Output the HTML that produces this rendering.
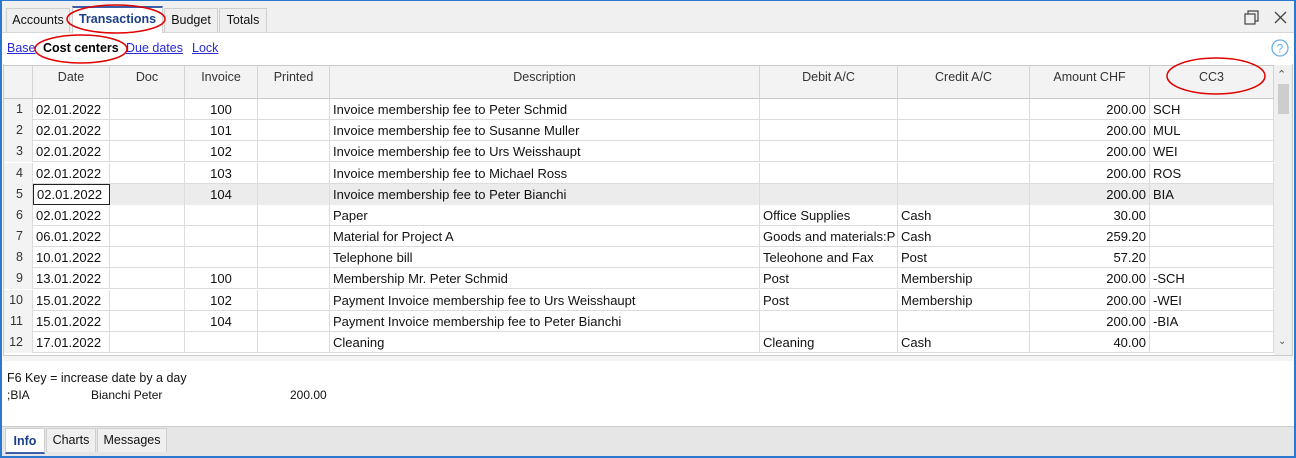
<!DOCTYPE html>
<html><head><meta charset="utf-8"><style>
*{box-sizing:border-box;margin:0;padding:0}
body{width:1296px;height:458px;overflow:hidden;background:#fff;font-family:"Liberation Sans",Arial,sans-serif;position:relative}
.a{position:absolute}
.frame{left:0;top:0;width:1296px;height:458px;border:2px solid #2b78d0;border-top:1px solid #2b78d0}
.topbar{left:2px;top:1px;width:1292px;height:32px;background:#f0f0f0;border-bottom:1px solid #d8d8d8}
.tab{position:absolute;top:8px;height:24px;border:1px solid #cfcfcf;border-bottom:none;background:#efefef;font-size:12.5px;color:#111;text-align:center;line-height:22px}
.tab.sel{background:#fff;top:6px;height:27px;border-top:2px solid #3c5fa8;font-weight:bold;color:#1a3f8a}
.lnk{position:absolute;top:41px;font-size:12.5px;color:#2a2ad8;text-decoration:underline}
.hdr{position:absolute;top:65px;height:34px;background:#f3f3f3;border-right:1px solid #d4d4d4;border-bottom:1px solid #c8c8c8;font-size:12.5px;color:#333;text-align:center;padding-top:4px;border-top:1px solid #c8c8c8}
.row{position:absolute;left:4px;height:21px;width:1270px;border-bottom:1px solid #dcdcdc;font-size:13px;color:#111}
.row div{position:absolute;top:0;height:21px;line-height:21px;border-right:1px solid #dcdcdc;white-space:nowrap;overflow:hidden;padding:0 3px}
.row .n{background:#f3f3f3;color:#333;text-align:right;padding-right:9px;font-size:12.5px}
.r{text-align:right}.c{text-align:center}
.hl div{background:#ececec}
</style></head><body>
<div class="a topbar"></div>
<div class="tab" style="left:6px;width:64px">Accounts</div>
<div class="tab sel" style="left:72px;width:91px">Transactions</div>
<div class="tab" style="left:164px;width:54px">Budget</div>
<div class="tab" style="left:219px;width:48px">Totals</div>
<svg class="a" style="left:1240px;top:8px" width="50" height="20"><rect x="5" y="6" width="10" height="10" fill="none" stroke="#444" stroke-width="1.2"/><path d="M8 6V3h10v10h-3" fill="none" stroke="#444" stroke-width="1.2"/><path d="M35 4l11 11M46 4L35 15" stroke="#444" stroke-width="1.3"/></svg>
<div class="lnk" style="left:7px">Base</div>
<div class="lnk" style="left:43px;color:#000;text-decoration:none;font-weight:bold">Cost centers</div>
<div class="lnk" style="left:126px">Due dates</div>
<div class="lnk" style="left:192px">Lock</div>
<svg class="a" style="left:1270px;top:38px" width="20" height="20"><circle cx="10" cy="10" r="8" fill="none" stroke="#6ab0e8" stroke-width="1.3"/><text x="10" y="14.5" font-size="12" fill="#6ab0e8" text-anchor="middle" font-family="Liberation Sans">?</text></svg>
<div class="a" style="left:3px;top:64px;width:1290px;height:292px;border:1px solid #c8c8c8;border-top:none"></div>
<div class="hdr" style="left:4px;width:29px"></div>
<div class="hdr" style="left:33px;width:77px">Date</div>
<div class="hdr" style="left:110px;width:75px">Doc</div>
<div class="hdr" style="left:185px;width:73px">Invoice</div>
<div class="hdr" style="left:258px;width:72px">Printed</div>
<div class="hdr" style="left:330px;width:430px">Description</div>
<div class="hdr" style="left:760px;width:138px">Debit A/C</div>
<div class="hdr" style="left:898px;width:132px">Credit A/C</div>
<div class="hdr" style="left:1030px;width:120px">Amount CHF</div>
<div class="hdr" style="left:1150px;width:124px">CC3</div>
<div class="a" style="left:1274px;top:65px;width:18px;height:290px;background:#f0f0f0"></div>
<div class="a" style="left:1278px;top:84px;width:11px;height:30px;background:#cdcdcd"></div>
<div class="a" style="left:1277px;top:68px;font-size:11px;color:#555">&#8963;</div>
<div class="a" style="left:1278px;top:336px;font-size:10px;color:#555">&#8964;</div>
<div id="rows"></div>
<div class="a" style="left:3px;top:355px;width:1290px;height:6px;background:#f4f4f4;border-top:1px solid #ccc"></div>
<div class="a" style="left:7px;top:371px;font-size:12.5px;color:#111">F6 Key = increase date by a day</div>
<div class="a" style="left:7px;top:388px;font-size:12px;color:#111">;BIA</div>
<div class="a" style="left:91px;top:388px;font-size:12px;color:#111">Bianchi Peter</div>
<div class="a" style="left:290px;top:388px;font-size:12px;color:#111">200.00</div>
<div class="a" style="left:2px;top:426px;width:1292px;height:30px;background:#e6e6e6;border-top:1px solid #ccc"></div>
<div class="tab" style="left:5px;top:428px;width:40px;height:26px;background:#fff;font-weight:bold;color:#1a3f8a;line-height:24px;border-bottom:2px solid #3c5fa8">Info</div>
<div class="tab" style="left:46px;top:428px;width:50px;background:#efefef">Charts</div>
<div class="tab" style="left:97px;top:428px;width:70px;background:#efefef">Messages</div>
<div class="a frame"></div>
<svg class="a" style="left:0;top:0" width="1296" height="120">
<ellipse cx="116" cy="19" rx="49" ry="14" fill="none" stroke="#e00000" stroke-width="1.5"/>
<ellipse cx="81" cy="49" rx="46" ry="14" fill="none" stroke="#e00000" stroke-width="1.5"/>
<ellipse cx="1216" cy="76" rx="49" ry="18" fill="none" stroke="#e00000" stroke-width="1.5"/>
</svg>
<script>
var d=[["02.01.2022","","100","","Invoice membership fee to Peter Schmid","","","200.00","SCH"],
["02.01.2022","","101","","Invoice membership fee to Susanne Muller","","","200.00","MUL"],
["02.01.2022","","102","","Invoice membership fee to Urs Weisshaupt","","","200.00","WEI"],
["02.01.2022","","103","","Invoice membership fee to Michael Ross","","","200.00","ROS"],
["02.01.2022","","104","","Invoice membership fee to Peter Bianchi","","","200.00","BIA"],
["02.01.2022","","","","Paper","Office Supplies","Cash","30.00",""],
["06.01.2022","","","","Material for Project A","Goods and materials:P","Cash","259.20",""],
["10.01.2022","","","","Telephone bill","Teleohone and Fax","Post","57.20",""],
["13.01.2022","","100","","Membership Mr. Peter Schmid","Post","Membership","200.00","-SCH"],
["15.01.2022","","102","","Payment Invoice membership fee to Urs Weisshaupt","Post","Membership","200.00","-WEI"],
["15.01.2022","","104","","Payment Invoice membership fee to Peter Bianchi","","","200.00","-BIA"],
["17.01.2022","","","","Cleaning","Cleaning","Cash","40.00",""]];
var L=[0,29,106,181,254,326,756,894,1026,1146],W=[29,77,75,73,72,430,138,132,120,124],cls=["n","","","c","","","","","r",""];
var h="";
for(var i=0;i<12;i++){var t=Math.round(99+i*21.18);
h+='<div class="row'+(i==4?' hl':'')+'" style="top:'+t+'px">';
var v=[String(i+1)].concat(d[i]);
for(var j=0;j<10;j++){var st='left:'+L[j]+'px;width:'+W[j]+'px';
if(i==4&&j==1)st+=';border:1px solid #222;background:#fff;line-height:19px';
h+='<div class="'+cls[j]+'" style="'+st+'">'+v[j]+'</div>';}
h+='</div>';}
document.getElementById('rows').innerHTML=h;
</script>
</body></html>
